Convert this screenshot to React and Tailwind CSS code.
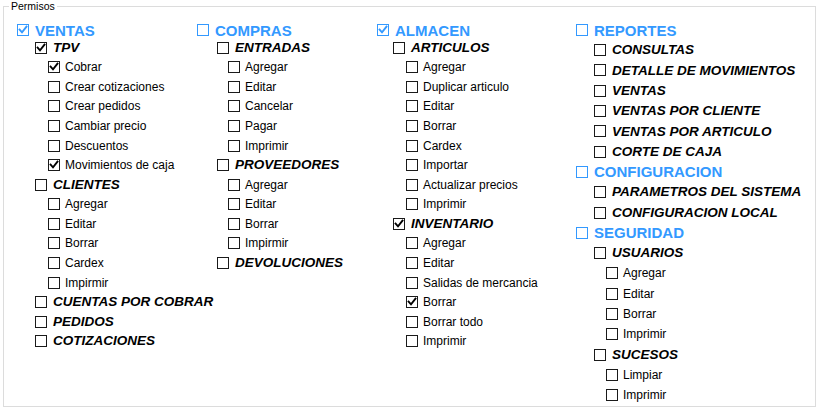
import React from "react";

function Box({ checked, blue }) {
  const border = blue ? "border-[#3399ff]" : "border-[#1a1a1a]";
  const stroke = blue ? "#3399ff" : "#000000";
  return (
    <span className={`relative inline-block w-[12px] h-[12px] shrink-0 border ${border} bg-white`}>
      {checked && (
        <svg className="absolute left-0 top-0" width="10" height="10" viewBox="0 0 10 10">
          <path d="M1.6 4.6 L4 7.3 L8.5 1.7" fill="none" stroke={stroke} strokeWidth="1.9" strokeLinecap="square" />
        </svg>
      )}
    </span>
  );
}

const col1 = [
  ["h", "VENTAS", true],
  [1, "TPV", true],
  [2, "Cobrar", true],
  [2, "Crear cotizaciones"],
  [2, "Crear pedidos"],
  [2, "Cambiar precio"],
  [2, "Descuentos"],
  [2, "Movimientos de caja", true],
  [1, "CLIENTES"],
  [2, "Agregar"],
  [2, "Editar"],
  [2, "Borrar"],
  [2, "Cardex"],
  [2, "Impirmir"],
  [1, "CUENTAS POR COBRAR"],
  [1, "PEDIDOS"],
  [1, "COTIZACIONES"],
];

const col2 = [
  ["h", "COMPRAS"],
  [1, "ENTRADAS"],
  [2, "Agregar"],
  [2, "Editar"],
  [2, "Cancelar"],
  [2, "Pagar"],
  [2, "Imprimir"],
  [1, "PROVEEDORES"],
  [2, "Agregar"],
  [2, "Editar"],
  [2, "Borrar"],
  [2, "Impirmir"],
  [1, "DEVOLUCIONES"],
];

const col3 = [
  ["h", "ALMACEN", true],
  [1, "ARTICULOS"],
  [2, "Agregar"],
  [2, "Duplicar articulo"],
  [2, "Editar"],
  [2, "Borrar"],
  [2, "Cardex"],
  [2, "Importar"],
  [2, "Actualizar precios"],
  [2, "Imprimir"],
  [1, "INVENTARIO", true],
  [2, "Agregar"],
  [2, "Editar"],
  [2, "Salidas de mercancia"],
  [2, "Borrar", true],
  [2, "Borrar todo"],
  [2, "Imprimir"],
];

const col4 = [
  ["h", "REPORTES"],
  [1, "CONSULTAS"],
  [1, "DETALLE DE MOVIMIENTOS"],
  [1, "VENTAS"],
  [1, "VENTAS POR CLIENTE"],
  [1, "VENTAS POR ARTICULO"],
  [1, "CORTE DE CAJA"],
  ["h", "CONFIGURACION"],
  [1, "PARAMETROS DEL SISTEMA"],
  [1, "CONFIGURACION LOCAL"],
  ["h", "SEGURIDAD"],
  [1, "USUARIOS"],
  [2, "Agregar"],
  [2, "Editar"],
  [2, "Borrar"],
  [2, "Imprimir"],
  [1, "SUCESOS"],
  [2, "Limpiar"],
  [2, "Imprimir"],
];

function Column({ items, width, l1, l2, rowH, firstH, pt }) {
  return (
    <div className={`flex flex-col ${width} ${pt}`}>
      {items.map(([lvl, label, checked], i) => {
        const h = i === 0 ? firstH : rowH;
        if (lvl === "h") {
          return (
            <div key={i} className={`flex items-center ${h}`}>
              <Box checked={checked} blue />
              <span className="ml-[6px] text-[15px] font-bold text-[#3399ff] whitespace-nowrap leading-none">
                {label}
              </span>
            </div>
          );
        }
        if (lvl === 1) {
          return (
            <div key={i} className={`flex items-center ${h} ${l1}`}>
              <Box checked={checked} />
              <span className="ml-[6px] text-[13.5px] font-bold italic text-black whitespace-nowrap leading-none">
                {label}
              </span>
            </div>
          );
        }
        return (
          <div key={i} className={`flex items-center ${h} ${l2}`}>
            <Box checked={checked} />
            <span className="ml-[5px] text-[12px] text-black whitespace-nowrap leading-none">{label}</span>
          </div>
        );
      })}
    </div>
  );
}

export default function App() {
  return (
    <div className="w-[817px] h-[409px] bg-white overflow-hidden font-['Liberation_Sans',Arial,sans-serif] pt-[6px] pl-[3px]">
      <div className="relative w-[813px] h-[401px] border border-[#dcdcdc] pl-[13px] flex">
        <span className="absolute left-[5px] top-[-7px] bg-white px-[2px] text-[10.5px] leading-[12px] text-black">
          Permisos
        </span>
        <Column items={col1} width="w-[180px]" l1="pl-[18px]" l2="pl-[31px]" rowH="h-[19.57px]" firstH="h-[15.5px]" pt="pt-[15.5px]" />
        <Column items={col2} width="w-[180px]" l1="pl-[20px]" l2="pl-[31px]" rowH="h-[19.57px]" firstH="h-[15.5px]" pt="pt-[15.5px]" />
        <Column items={col3} width="w-[199px]" l1="pl-[16px]" l2="pl-[29px]" rowH="h-[19.57px]" firstH="h-[15.5px]" pt="pt-[15.5px]" />
        <Column items={col4} width="w-[230px]" l1="pl-[18px]" l2="pl-[30px]" rowH="h-[20.3px]" firstH="h-[19.5px]" pt="pt-[13.5px]" />
      </div>
    </div>
  );
}
